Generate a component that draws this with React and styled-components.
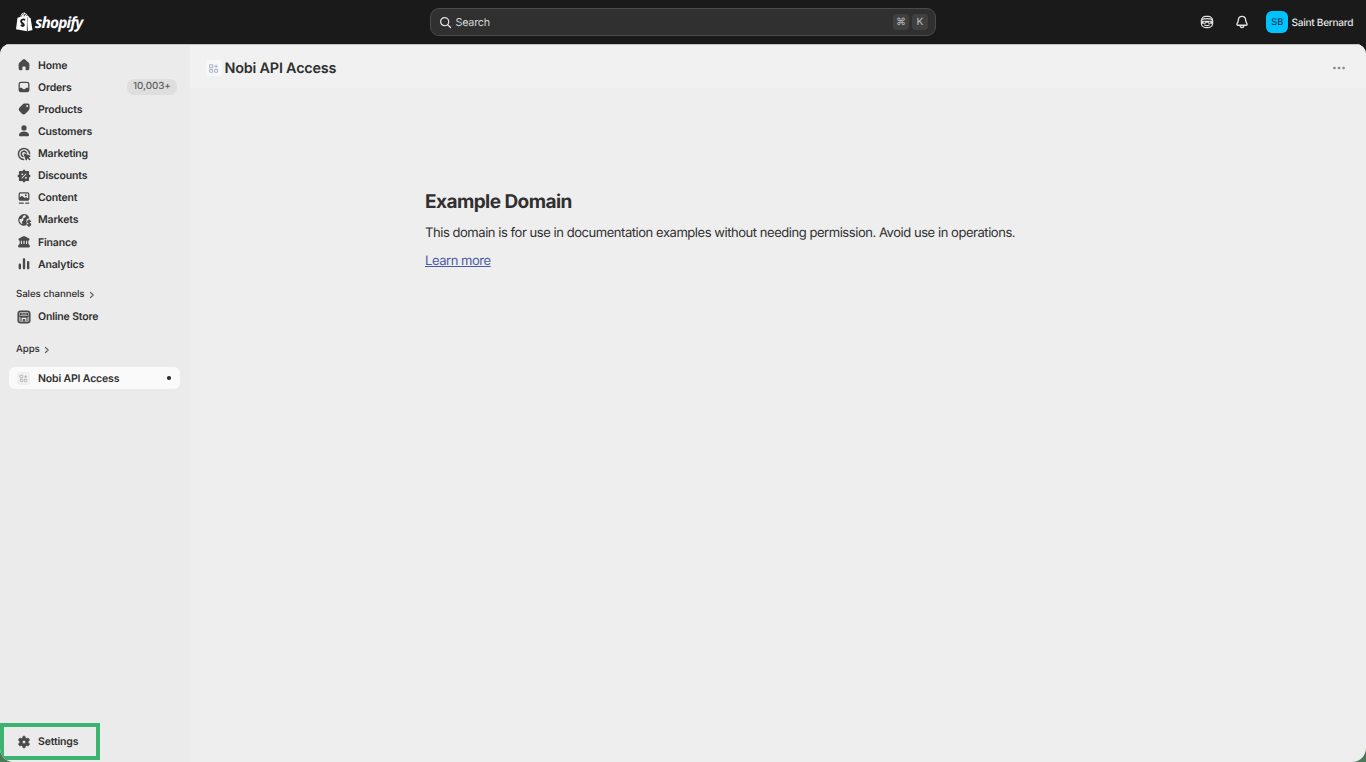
import styled, { createGlobalStyle } from "styled-components";

const GlobalStyle = createGlobalStyle`
  * {
    box-sizing: border-box;
  }

  body {
    margin: 0;
    overflow: hidden;
    font-family: Inter, "Liberation Sans", sans-serif;
    color: #303030;
    text-rendering: geometricPrecision;
  }
`;

const Page = styled.div`
  width: 100vw;
  height: 100vh;

  display: flex;
  flex-direction: column;

  background: linear-gradient(to bottom, #1a1a1a 100px, #4b7a57 700px);
`;

const TopBar = styled.header`
  height: 44px;
  flex-shrink: 0;

  display: grid;
  grid-template-columns: 430px 506px 1fr;
  align-items: center;

  background: #1a1a1a;
`;

const Logo = styled.div`
  display: flex;
  align-items: center;
  gap: 2px;
  padding-left: 15px;

  svg {
    width: 18px;
    height: 20px;
  }
`;

const LogoName = styled.span`
  padding-top: 1px;

  font-family: "Open Sans", sans-serif;
  font-size: 15.4px;
  line-height: 20px;
  font-weight: 700;
  font-style: italic;
  letter-spacing: -0.8px;
  color: #ffffff;
`;

const SearchBar = styled.div`
  height: 28px;

  display: flex;
  align-items: center;
  padding: 0 7px 0 8px;

  color: #e3e3e3;
  background: #303030;
  border: 1px solid #4a4a4a;
  border-radius: 9px;
`;

const SearchLabel = styled.span`
  flex: 1;
  margin-left: 3.5px;

  font-size: 10.8px;
  font-weight: 400;
  letter-spacing: -0.25px;
  color: #d6d6d6;
`;

const Key = styled.kbd`
  width: 16px;
  height: 16px;
  margin-left: 3px;

  display: flex;
  align-items: center;
  justify-content: center;

  font-family: Inter, "DejaVu Sans", sans-serif;
  font-size: 10px;
  font-weight: 500;
  color: #b0b0b0;
  background: #404040;
  border-radius: 4px;
`;

const Account = styled.div`
  display: flex;
  align-items: center;
  justify-content: flex-end;
  padding-right: 12.5px;
  color: #e3e3e3;
`;

const AccountIcon = styled.span`
  display: flex;
  margin-right: ${(props) => props.$space}px;
`;

const Avatar = styled.span`
  width: 22px;
  height: 22px;
  margin-right: 3.3px;

  display: flex;
  align-items: center;
  justify-content: center;
  padding-top: 1px;

  font-size: 9.2px;
  font-weight: 500;
  color: #003d59;
  background: #00c2ff;
  border-radius: 6px;
`;

const UserName = styled.span`
  width: 62px;
  padding-top: 1px;

  font-size: 10.1px;
  font-weight: 500;
  letter-spacing: -0.28px;
  white-space: nowrap;
`;

const Frame = styled.div`
  flex: 1;
  min-height: 0;

  display: flex;

  background: #eeeeee;
  border-radius: 10px 10px 14px 14px;
  overflow: hidden;
`;

const Sidebar = styled.nav`
  width: 190px;
  height: 100%;

  display: flex;
  flex-direction: column;
  padding-top: 10px;

  background: #ebebeb;
  box-shadow: inset 0 1px 0 #c4c4c4;
`;

const NavItem = styled.a`
  height: ${(props) => (props.$active ? 22 : 22.14)}px;
  flex-shrink: 0;
  margin: 0 10px 0 9px;

  display: flex;
  align-items: center;
  padding: 0 3px 0 6.7px;

  font-size: 10.5px;
  font-weight: 600;
  letter-spacing: -0.16px;
  color: #303030;
  background: ${(props) => (props.$active ? "#fafafa" : "transparent")};
  border-radius: 6px;

  svg {
    color: #4a4a4a;
  }
`;

const NavLabel = styled.span`
  flex: 1;
  margin-left: 6.3px;
  white-space: nowrap;
`;

const CountBadge = styled.span`
  height: 16px;
  padding: 0 6.3px;

  font-size: 9.8px;
  line-height: 16.6px;
  font-weight: 500;
  letter-spacing: -0.08px;
  color: #616161;
  background: #dedede;
  border-radius: 7px;
`;

const Dot = styled.span`
  width: 3.4px;
  height: 3.4px;
  margin-right: 6.3px;

  background: #303030;
  border-radius: 50%;
`;

const SectionTitle = styled.div`
  height: 22px;
  flex-shrink: 0;
  margin-top: ${(props) => props.$top}px;
  margin-bottom: ${(props) => props.$bottom || 0}px;
  padding-left: 16px;

  display: flex;
  align-items: center;
  gap: 4px;

  font-size: 9.7px;
  font-weight: 550;
  letter-spacing: -0.08px;
  color: #303030;
`;

const SettingsBox = styled.div`
  width: 100px;
  height: 37px;
  margin-top: auto;
  margin-bottom: 2px;

  display: flex;
  align-items: center;

  border: 4px solid #3cb371;

  ${NavItem} {
    margin-left: 5px;
    margin-right: 0;
  }
`;

const AppTile = styled.span`
  width: ${(props) => props.$size}px;
  height: ${(props) => props.$size}px;
  margin: 0 ${(props) => (props.$size === 16 ? 0 : 1.5)}px;

  display: flex;
  align-items: center;
  justify-content: center;

  background: ${(props) => props.$bg};
  border-radius: 3px;

  svg {
    color: ${(props) => props.$color};
  }
`;

const Main = styled.main`
  flex: 1;
`;

const AppHeader = styled.div`
  height: 44px;

  display: flex;
  align-items: center;
  justify-content: space-between;
  padding: 4px 19px 0 15.5px;

  background: #f1f1f1;
  box-shadow: inset 0 1px 0 #c4c4c4;
`;

const AppTitle = styled.div`
  display: flex;
  align-items: center;
  gap: 3px;

  font-size: 14.4px;
  font-weight: 600;
  letter-spacing: -0.2px;
  white-space: nowrap;
`;

const Article = styled.article`
  padding: 102px 0 0 235px;
`;

const Heading = styled.h1`
  margin: 0 0 10px;

  font-size: 19px;
  line-height: 24px;
  font-weight: 700;
  letter-spacing: -0.55px;
`;

const Paragraph = styled.p`
  margin: 0 0 9px;

  font-size: 13px;
  line-height: 19px;
  letter-spacing: -0.45px;
  white-space: nowrap;
`;

const Link = styled.a`
  color: #4a5ba5;
  text-decoration: underline;
`;

const Icon = styled.svg.attrs((props) => ({
  width: props.$size || 16,
  height: props.$size || 16,
  viewBox: "0 0 20 20",
}))`
  flex-shrink: 0;
  fill: currentColor;
  fill-rule: evenodd;
`;

const Stroke = (props) => (
  <g fill="none" stroke="currentColor" strokeWidth="1.6" strokeLinecap="round" strokeLinejoin="round" {...props} />
);

const icons = {
  home: (
    <path d="M8.7 3.2a2 2 0 0 1 2.6 0l4.6 4.1c.5.5.8 1.1.8 1.8v5.4a2 2 0 0 1-2 2h-1.9a.8.8 0 0 1-.8-.8v-2.9a1 1 0 0 0-1-1H9a1 1 0 0 0-1 1v2.9a.8.8 0 0 1-.8.8H5.3a2 2 0 0 1-2-2V9.1c0-.7.3-1.3.8-1.8z" />
  ),
  orders: (
    <path d="M6.2 3.3h7.600a3 3 0 0 1 3 3v7.400a3 3 0 0 1-3 3H6.200a3 3 0 0 1-3-3V6.300a3 3 0 0 1 3-3zm.1 1.700A1.500 1.500 0 0 0 4.800 6.500v4.300h2c.6 0 1 .3 1.200.8.3.8 1 1.300 2 1.300s1.700-.5 2-1.300c.2-.5.6-.8 1.200-.8h2V6.500A1.500 1.500 0 0 0 13.700 5z" />
  ),
  products: (
    <path d="M10.800 3.200h4A2.100 2.100 0 0 1 17 5.300v3.900c0 .9-.4 1.700-1 2.300l-4.300 4.300a3 3 0 0 1-4.200 0l-3.300-3.300a3 3 0 0 1 0-4.200l4.300-4.200c.6-.6 1.400-.9 2.300-.9zM14 7.600a1.300 1.300 0 1 0 0-2.600 1.300 1.300 0 0 0 0 2.600z" />
  ),
  customers: (
    <path d="M10 9.500a3.300 3.300 0 1 0 0-6.600 3.300 3.300 0 0 0 0 6.600zm-6.300 5.200c.8-2.500 3.400-4 6.300-4s5.500 1.500 6.300 4c.3 1-.5 2-1.600 2H5.300c-1.100 0-1.900-1-1.600-2z" />
  ),
  marketing: (
    <>
      <Stroke strokeWidth="1.9">
        <path d="M17 9.500A7 7 0 1 0 9.500 17" />
        <path d="M13.100 8.700A3.400 3.400 0 1 0 8.700 13.100" />
      </Stroke>
      <path d="M10.400 9.500l7.300 2.500c.7.2.7 1.100 0 1.400l-1.900.8 2.100 2.100c.8.8-.5 2.100-1.300 1.300l-2.200-2.100-.9 2c-.3.7-1.200.6-1.400 0L9.500 10.400c-.2-.6.3-1.100.9-.9z" />
    </>
  ),
  discounts: (
    <>
      <path d="M10 2.600l1.700 1.900h3.800v3.800L17.400 10l-1.900 1.700v3.800h-3.800L10 17.400l-1.700-1.900H4.500v-3.800L2.600 10l1.900-1.700V4.500h3.800z" stroke="currentColor" strokeWidth="1.6" strokeLinejoin="round" />
      <g stroke="#ebebeb" fill="#ebebeb" strokeLinecap="round">
        <path d="M7.500 12.500l5-5" strokeWidth="1.3" />
        <circle cx="7.700" cy="7.800" r=".6" />
        <circle cx="12.300" cy="12.300" r=".6" />
      </g>
    </>
  ),
  content: (
    <>
      <path d="M5.500 2.900h9a2.300 2.300 0 0 1 2.300 2.300v6a2.300 2.300 0 0 1-2.300 2.300h-9a2.300 2.300 0 0 1-2.300-2.300v-6a2.300 2.300 0 0 1 2.300-2.300zM5.700 4.500c-.5 0-.9.4-.9.9v3.800l1.900-1.500c.5-.4 1.100-.4 1.600 0l2.600 2.300 1-.7c.5-.4 1.100-.3 1.500 0l1.800 1.400V5.400c0-.5-.4-.9-.9-.9zm6.600 3.200a1.200 1.200 0 1 0 0-2.400 1.200 1.200 0 0 0 0 2.400z" />
      <Stroke strokeWidth="1.5">
        <path d="M4.200 16.300h5M12.100 16.300h3.800" />
      </Stroke>
    </>
  ),
  markets: (
    <>
      <path d="M9.800 2.600a7.200 7.200 0 0 1 6.900 5.300c-2-.1-3.800 1.300-3.800 3.300 0 1.100.5 1.900 1.100 2.500-.8.4-1.200 1.200-.9 2l.3.7A7.300 7.300 0 1 1 9.800 2.600zM10.200 4.200c-2.300 1.300-1.700 3.300-2.900 4.100-.9.600-2-.1-3 .8-.3 2.900 1.300 5.100 3.700 6.100.2-1.100-.8-1.600-.7-2.600.2-1.300 2-1.400 2-2.900 0-.9-.5-1.500 0-2.100.6-.8 2-.5 2.600-1.500.4-.7.3-1.200 0-1.700-.5-.2-1.100-.3-1.700-.2z" />
      <Stroke strokeWidth="1.7">
        <path d="M18.200 11.700c-.5-.6-1.200-.8-1.900-.8-1 0-1.800.5-1.800 1.400 0 2.100 3.800.9 3.800 3 0 .9-.8 1.500-1.900 1.500-.9 0-1.600-.3-2.100-.9M16.300 10v8" />
      </Stroke>
    </>
  ),
  finance: (
    <path d="M9.200 2.800a2 2 0 0 1 1.600 0l5.200 2.600c.6.3.9.8.9 1.400 0 .9-.7 1.500-1.500 1.500v4.300c.9.2 1.500.9 1.700 1.800l.2 1c.2.8-.4 1.400-1.100 1.400H3.800c-.7 0-1.300-.6-1.100-1.400l.2-1c.2-.9.8-1.600 1.700-1.800V8.300c-.8 0-1.500-.6-1.500-1.500 0-.6.3-1.100.9-1.400zM6.100 8.500v4h1.300v-4zm3.200 0v4h1.400v-4zm3.300 0v4h1.300v-4z" />
  ),
  analytics: (
    <path d="M10 2.800c.9 0 1.500.6 1.500 1.500v10.900a1.500 1.500 0 0 1-3 0V4.300c0-.9.6-1.500 1.500-1.500zM4.800 9.300c.8 0 1.500.7 1.500 1.500v4.400a1.500 1.500 0 0 1-3 0v-4.400c0-.8.7-1.500 1.500-1.500zM15.200 6.300c.8 0 1.500.7 1.500 1.500v7.400a1.500 1.500 0 0 1-3 0V7.800c0-.8.7-1.500 1.500-1.500z" />
  ),
  store: (
    <>
      <rect x="1.8" y="1.8" width="16.4" height="16.4" rx="4" />
      <rect x="3.8" y="3.8" width="12.4" height="12.4" rx="2" fill="#b4b4b4" />
      <path d="M5.500 4.900h9l1.400 3.900c0 1-.8 1.700-1.700 1.700v5H5.800v-5c-.9 0-1.700-.7-1.700-1.700z" />
      <path d="M5.500 8.200h9M6.700 6.300h6.600" stroke="#d5d5d5" strokeWidth=".9" />
      <path d="M7 11h6v4.500h-1.500v-3h-3v3H7z" fill="#ebebeb" />
    </>
  ),
  settings: (
    <path d="M8.800 2.700h2.400l.6 2.200 1.200.7 2.200-.6 1.600 2-.3 1.100-1.200 1.400v1l1.200 1.400.3 1.100-1.600 2-2.200-.6-1.200.7-.6 2.200H8.800l-.6-2.200-1.200-.7-2.200.6-1.600-2 .3-1.100 1.200-1.400v-1L3.500 8.100 3.200 7l1.600-2 2.200.6 1.200-.7zM10 12.100a2.100 2.100 0 1 0 0-4.200 2.100 2.100 0 0 0 0 4.200z" stroke="currentColor" strokeWidth=".8" strokeLinejoin="round" />
  ),
  search: (
    <Stroke strokeWidth="1.9">
      <circle cx="8.700" cy="8.700" r="6.200" />
      <path d="M13.400 13.400l4.300 4.300" />
    </Stroke>
  ),
  sidekick: (
    <>
      <Stroke strokeWidth="1.6">
        <rect x="3" y="3" width="14" height="14" rx="5.500" />
        <path d="M3.500 6.800c4-1.300 9-1.300 13 0" />
        <path d="M7.200 13.700c1.700 1 3.900 1 5.600 0" />
      </Stroke>
      <path d="M2.500 8.300h15v1.900c0 1.200-.8 2-1.800 2h-2.800c-.9 0-1.600-.6-1.800-1.400h-2.200c-.2.8-.9 1.400-1.800 1.400H4.300c-1 0-1.800-.8-1.800-2zm3.100 1.300v1.200h2V9.600zm6.800 0v1.200h2V9.600z" />
    </>
  ),
  bell: (
    <Stroke strokeWidth="1.7">
      <path d="M10 2.900c-2.600 0-4.300 1.900-4.500 4.300-.1 2-.4 3-1.500 4.500-.8 1.200-.3 2.400 1 2.400h10c1.300 0 1.800-1.200 1-2.400-1.100-1.500-1.400-2.500-1.500-4.500-.2-2.400-1.900-4.300-4.500-4.300z" />
      <path d="M7.800 14.500c0 3.300 4.400 3.300 4.400 0" />
    </Stroke>
  ),
  apps: (
    <Stroke strokeWidth="1.9">
      <rect x="3" y="3" width="5.500" height="5.500" />
      <rect x="3" y="12" width="5.500" height="5" rx="1" />
      <rect x="12" y="12" width="5.500" height="5" rx="1" />
      <path d="M14.700 3.500v5M12.200 6h5" />
    </Stroke>
  ),
  more: (
    <g fill="#8a8a8a">
      <circle cx="4.300" cy="10" r="1.700" />
      <circle cx="10" cy="10" r="1.700" />
      <circle cx="15.700" cy="10" r="1.700" />
    </g>
  ),
};

const Chevron = () => (
  <svg width="6" height="8" viewBox="0 0 6 8">
    <path d="M1.500 1.500L4.200 4 1.500 6.500" fill="none" stroke="#616161" strokeWidth="1.2" strokeLinecap="round" strokeLinejoin="round" />
  </svg>
);

const ShopifyBag = () => (
  <svg viewBox="0 0 36 40" fill="#ffffff">
    <path d="M5 11.500l5.500-1.700C11.500 5 14.500 1.300 18 1c1.500-.1 2.700.8 3.500 2.300 2.200-.1 3.500 2 4 4.700l2.400 1L24 38.500 2 34.500z" />
    <path d="M25.800 8.500l3.400 3 2 .3L35 36l-9.500 2.500z" />
    <path d="M12.500 9.500C13.500 5.700 15.500 3.700 17.500 3c1 1.300 1.300 3 1.300 4.800M18 9c.3-2 1.500-4 3.500-4.500 1 1 1.400 2 1.700 3" fill="none" stroke="#1a1a1a" strokeWidth="1.2" />
    <path d="M20.200 15.700c-4-2-8-.4-8 3 0 4 5.500 4 5.500 7.500 0 2.300-3.200 2.300-6 0" fill="none" stroke="#1a1a1a" strokeWidth="3.8" />
    <path d="M25.300 10L24 37.500" fill="none" stroke="#1a1a1a" strokeWidth=".8" />
  </svg>
);

const navItems = [
  { label: "Home", icon: "home" },
  { label: "Orders", icon: "orders", count: "10,003+" },
  { label: "Products", icon: "products" },
  { label: "Customers", icon: "customers" },
  { label: "Marketing", icon: "marketing" },
  { label: "Discounts", icon: "discounts" },
  { label: "Content", icon: "content" },
  { label: "Markets", icon: "markets" },
  { label: "Finance", icon: "finance" },
  { label: "Analytics", icon: "analytics" },
];

function App() {
  return (
    <Page>
      <GlobalStyle />
      <TopBar>
        <Logo>
          <ShopifyBag />
          <LogoName>shopify</LogoName>
        </Logo>
        <SearchBar>
          <Icon $size={13}>{icons.search}</Icon>
          <SearchLabel>Search</SearchLabel>
          <Key>⌘</Key>
          <Key>K</Key>
        </SearchBar>
        <Account>
          <AccountIcon $space={19}><Icon>{icons.sidekick}</Icon></AccountIcon>
          <AccountIcon $space={16}><Icon>{icons.bell}</Icon></AccountIcon>
          <Avatar>SB</Avatar>
          <UserName>Saint Bernard</UserName>
        </Account>
      </TopBar>
      <Frame>
        <Sidebar>
          {navItems.map((item) => (
            <NavItem key={item.label}>
              <Icon>{icons[item.icon]}</Icon>
              <NavLabel>{item.label}</NavLabel>
              {item.count && <CountBadge>{item.count}</CountBadge>}
            </NavItem>
          ))}
          <SectionTitle $top={8.3}>Sales channels <Chevron /></SectionTitle>
          <NavItem>
            <Icon>{icons.store}</Icon>
            <NavLabel>Online Store</NavLabel>
          </NavItem>
          <SectionTitle $top={11} $bottom={6.5}>Apps <Chevron /></SectionTitle>
          <NavItem $active>
            <AppTile $size={13} $bg="#f0f0f0" $color="#b5b5b5"><Icon $size={9}>{icons.apps}</Icon></AppTile>
            <NavLabel>Nobi API Access</NavLabel>
            <Dot />
          </NavItem>
          <SettingsBox>
            <NavItem>
              <Icon>{icons.settings}</Icon>
              <NavLabel>Settings</NavLabel>
            </NavItem>
          </SettingsBox>
        </Sidebar>
        <Main>
          <AppHeader>
            <AppTitle>
              <AppTile $size={16} $bg="#f7f8fa" $color="#a9b4c8"><Icon $size={11}>{icons.apps}</Icon></AppTile>
              Nobi API Access
            </AppTitle>
            <Icon>{icons.more}</Icon>
          </AppHeader>
          <Article>
            <Heading>Example Domain</Heading>
            <Paragraph>
              This domain is for use in documentation examples without needing permission. Avoid use in operations.
            </Paragraph>
            <Paragraph><Link>Learn more</Link></Paragraph>
          </Article>
        </Main>
      </Frame>
    </Page>
  );
}

export default App;
